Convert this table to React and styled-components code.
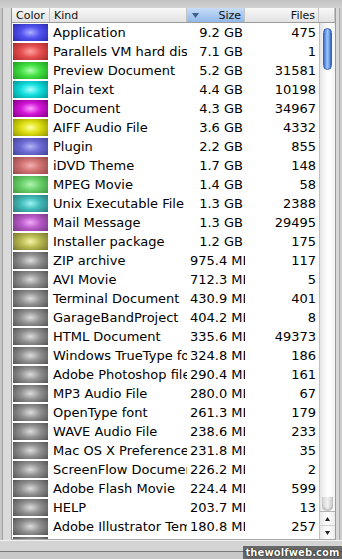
import React from "react";
import styled, { createGlobalStyle } from "styled-components";

const GlobalStyle = createGlobalStyle`
  html, body {
    margin: 0;
    padding: 0;
    background: #cfcfcf;
    overflow: hidden;
  }
`;

const swatchColors = {
  blue: ["#b0b0ff", "#5252f0", "#2c2cb4"],
  red: ["#ffa2a2", "#e65050", "#ac2c2c"],
  green: ["#b0ffb0", "#42e042", "#22a022"],
  cyan: ["#a8ffff", "#12dede", "#029898"],
  magenta: ["#ff9cff", "#d214d8", "#880088"],
  yellow: ["#ffffa0", "#dede12", "#989800"],
  blueMuted: ["#b4b4f4", "#6c6cd6", "#46469a"],
  redMuted: ["#f4b0b0", "#d07272", "#984a4a"],
  greenMuted: ["#b0f4b0", "#6ad06a", "#429a42"],
  tealMuted: ["#9cf4f4", "#42baba", "#2a8080"],
  purpleMuted: ["#f4a8fa", "#b85ac8", "#7a3a88"],
  olive: ["#f4f4a8", "#baba52", "#7a7a30"],
  gray: ["#dcdcdc", "#929292", "#585858"],
};

const rows = [
  ["Application", "9.2 GB", "475", "blue"],
  ["Parallels VM hard disk", "7.1 GB", "1", "red"],
  ["Preview Document", "5.2 GB", "31581", "green"],
  ["Plain text", "4.4 GB", "10198", "cyan"],
  ["Document", "4.3 GB", "34967", "magenta"],
  ["AIFF Audio File", "3.6 GB", "4332", "yellow"],
  ["Plugin", "2.2 GB", "855", "blueMuted"],
  ["iDVD Theme", "1.7 GB", "148", "redMuted"],
  ["MPEG Movie", "1.4 GB", "58", "greenMuted"],
  ["Unix Executable File", "1.3 GB", "2388", "tealMuted"],
  ["Mail Message", "1.3 GB", "29495", "purpleMuted"],
  ["Installer package", "1.2 GB", "175", "olive"],
  ["ZIP archive", "975.4 MB", "117", "gray"],
  ["AVI Movie", "712.3 MB", "5", "gray"],
  ["Terminal Document", "430.9 MB", "401", "gray"],
  ["GarageBandProject", "404.2 MB", "8", "gray"],
  ["HTML Document", "335.6 MB", "49373", "gray"],
  ["Windows TrueType font", "324.8 MB", "186", "gray"],
  ["Adobe Photoshop file", "290.4 MB", "161", "gray"],
  ["MP3 Audio File", "280.0 MB", "67", "gray"],
  ["OpenType font", "261.3 MB", "179", "gray"],
  ["WAVE Audio File", "238.6 MB", "233", "gray"],
  ["Mac OS X Preference Pane", "231.8 MB", "35", "gray"],
  ["ScreenFlow Document", "226.2 MB", "2", "gray"],
  ["Adobe Flash Movie", "224.4 MB", "599", "gray"],
  ["HELP", "203.7 MB", "13", "gray"],
  ["Adobe Illustrator Template", "180.8 MB", "257", "gray"],
  ["Keynote Document", "171.5 MB", "88", "gray"],
];

const Window = styled.div`
  position: relative;
  width: 342px;
  height: 559px;
  display: flex;
  flex-direction: column;
  background: #cfcfcf;
  font-family: "DejaVu Sans", "Liberation Sans", sans-serif;
  overflow: hidden;
`;

const TopStrip = styled.div`
  height: 8px;
  background: linear-gradient(#c2c2c2, #d2d2d2);
`;

const Middle = styled.div`
  display: flex;
  height: 532px;
`;

const SideFrame = styled.div`
  width: ${(p) => p.w}px;
  background: ${(p) =>
    p.right
      ? "linear-gradient(to right, #d8d8d8 0 3px, #a8a8a8 3px 4px, #cccccc 4px)"
      : "linear-gradient(to right, #c6c6c6 0 2px, #a2a2a2 2px 3px, #dadada 3px)"};
`;

const Panel = styled.div`
  width: 323px;
  display: flex;
  flex-direction: column;
  border-left: 1px solid #8e8e8e;
  border-right: 1px solid #9a9a9a;
  border-bottom: 1px solid #a8a8a8;
  background: #fff;
`;

const HeaderRow = styled.div`
  display: grid;
  grid-template-columns: 38px 137px 58px 74px 16px;
  height: 14px;
  border-bottom: 1px solid #9c9c9c;
  background: linear-gradient(#f8f8f8, #e2e2e2);
`;

const HeadCell = styled.div`
  display: flex;
  align-items: center;
  justify-content: ${(p) => (p.right ? "flex-end" : "flex-start")};
  padding: 0 ${(p) => (p.right ? "3px" : "0")} 0 ${(p) => (p.right ? "0" : "4px")};
  font-size: 11px;
  color: #111;
  border-right: 1px solid #c4c4c4;
  background: ${(p) =>
    p.active ? "linear-gradient(#c6dcf7, #93b9e8)" : "transparent"};
  overflow: hidden;
  white-space: nowrap;
`;

const SortArrow = styled.svg`
  margin-right: auto;
  margin-left: 5px;
`;

const Body = styled.div`
  display: flex;
  height: 516px;
`;

const List = styled.div`
  width: 307px;
  overflow: hidden;
`;

const Row = styled.div`
  display: grid;
  grid-template-columns: 38px 137px 58px 74px;
  height: 19px;
  align-items: center;
  font-size: 13px;
  color: #000;
`;

const Swatch = styled.div`
  width: 35px;
  height: 17px;
  margin-left: 1px;
  background: ${(p) => {
    const [hi, base, lo] = swatchColors[p.color];
    return `radial-gradient(ellipse 62% 75% at 50% 50%, ${hi} 0%, ${base} 45%, ${lo} 100%)`;
  }};
`;

const TextCell = styled.div`
  overflow: hidden;
  white-space: nowrap;
  text-align: ${(p) => (p.right ? "right" : "left")};
  padding: ${(p) => p.pad};
`;

const Scroller = styled.div`
  width: 15px;
  display: flex;
  flex-direction: column;
  border-left: 1px solid #c2c2c2;
  background: linear-gradient(to right, #e4e4e4, #f8f8f8 35%, #ffffff 60%, #f2f2f2);
`;

const Track = styled.div`
  flex: 1;
  display: flex;
  flex-direction: column;
  padding: 5px 0 0 3px;
`;

const Thumb = styled.div`
  width: 9px;
  height: 42px;
  border-radius: 5px;
  border: 1px solid #3a64b0;
  box-sizing: border-box;
  background: linear-gradient(to right, #3d72d0, #9cc4f4 45%, #7aaae8 70%, #2f62c0);
`;

const TrackEnd = styled.div`
  margin-top: auto;
  margin-left: -1px;
  width: 11px;
  height: 14px;
  border-radius: 0 0 6px 6px;
  background: linear-gradient(to right, #d2d2d2, #f2f2f2 50%, #c8c8c8);
  box-shadow: inset 0 -2px 2px rgba(0, 0, 0, 0.18);
`;

const ArrowButton = styled.div`
  height: 13px;
  display: flex;
  align-items: center;
  justify-content: center;
  border-top: 1px solid ${(p) => (p.first ? "#b4b4b4" : "#d0d0d0")};
  background: linear-gradient(to right, #e8e8e8, #ffffff 50%, #ececec);
`;

const BottomStrip = styled.div`
  flex: 1;
  display: flex;
  flex-direction: column;
`;

const StripTop = styled.div`
  height: 10px;
  border-top: 1px solid #f2f2f2;
  background: #d4d4d4;
`;

const StripLine = styled.div`
  height: 1px;
  background: #7c7c7c;
`;

const StripBottom = styled.div`
  flex: 1;
  background: #c8c8c8;
`;

const Watermark = styled.div`
  position: absolute;
  right: 0;
  bottom: 0;
  width: 99px;
  height: 13px;
  display: flex;
  align-items: center;
  justify-content: center;
  background: rgba(70, 70, 70, 0.75);
  color: #fff;
  font-family: "DejaVu Sans", sans-serif;
  font-weight: bold;
  font-size: 10px;
  letter-spacing: 0.1px;
  text-shadow: 0 0 1px #000, 0 0 1px #000;
`;

export default function App() {
  return (
    <Window>
      <GlobalStyle />
      <TopStrip />
      <Middle>
        <SideFrame w={11} />
        <Panel>
          <HeaderRow>
            <HeadCell>Color</HeadCell>
            <HeadCell>Kind</HeadCell>
            <HeadCell active right>
              <SortArrow width="7" height="5" viewBox="0 0 7 5">
                <polygon points="0,0 7,0 3.5,5" fill="#3d5f8f" />
              </SortArrow>
              Size
            </HeadCell>
            <HeadCell right>Files</HeadCell>
            <HeadCell />
          </HeaderRow>
          <Body>
            <List>
              {rows.map(([kind, size, files, color]) => (
                <Row key={kind}>
                  <Swatch color={color} />
                  <TextCell pad="0 0 0 3px">{kind}</TextCell>
                  <TextCell right pad="0 2px 0 3px">
                    {size}
                  </TextCell>
                  <TextCell right pad="0 3px 0 0">
                    {files}
                  </TextCell>
                </Row>
              ))}
            </List>
            <Scroller>
              <Track>
                <Thumb />
                <TrackEnd />
              </Track>
              <ArrowButton first>
                <svg width="5" height="4" viewBox="0 0 5 4">
                  <polygon points="2.5,0 5,4 0,4" fill="#222" />
                </svg>
              </ArrowButton>
              <ArrowButton>
                <svg width="5" height="4" viewBox="0 0 5 4">
                  <polygon points="0,0 5,0 2.5,4" fill="#222" />
                </svg>
              </ArrowButton>
            </Scroller>
          </Body>
        </Panel>
        <SideFrame w={6} right />
      </Middle>
      <BottomStrip>
        <StripTop />
        <StripLine />
        <StripBottom />
      </BottomStrip>
      <Watermark>thewolfweb.com</Watermark>
    </Window>
  );
}
